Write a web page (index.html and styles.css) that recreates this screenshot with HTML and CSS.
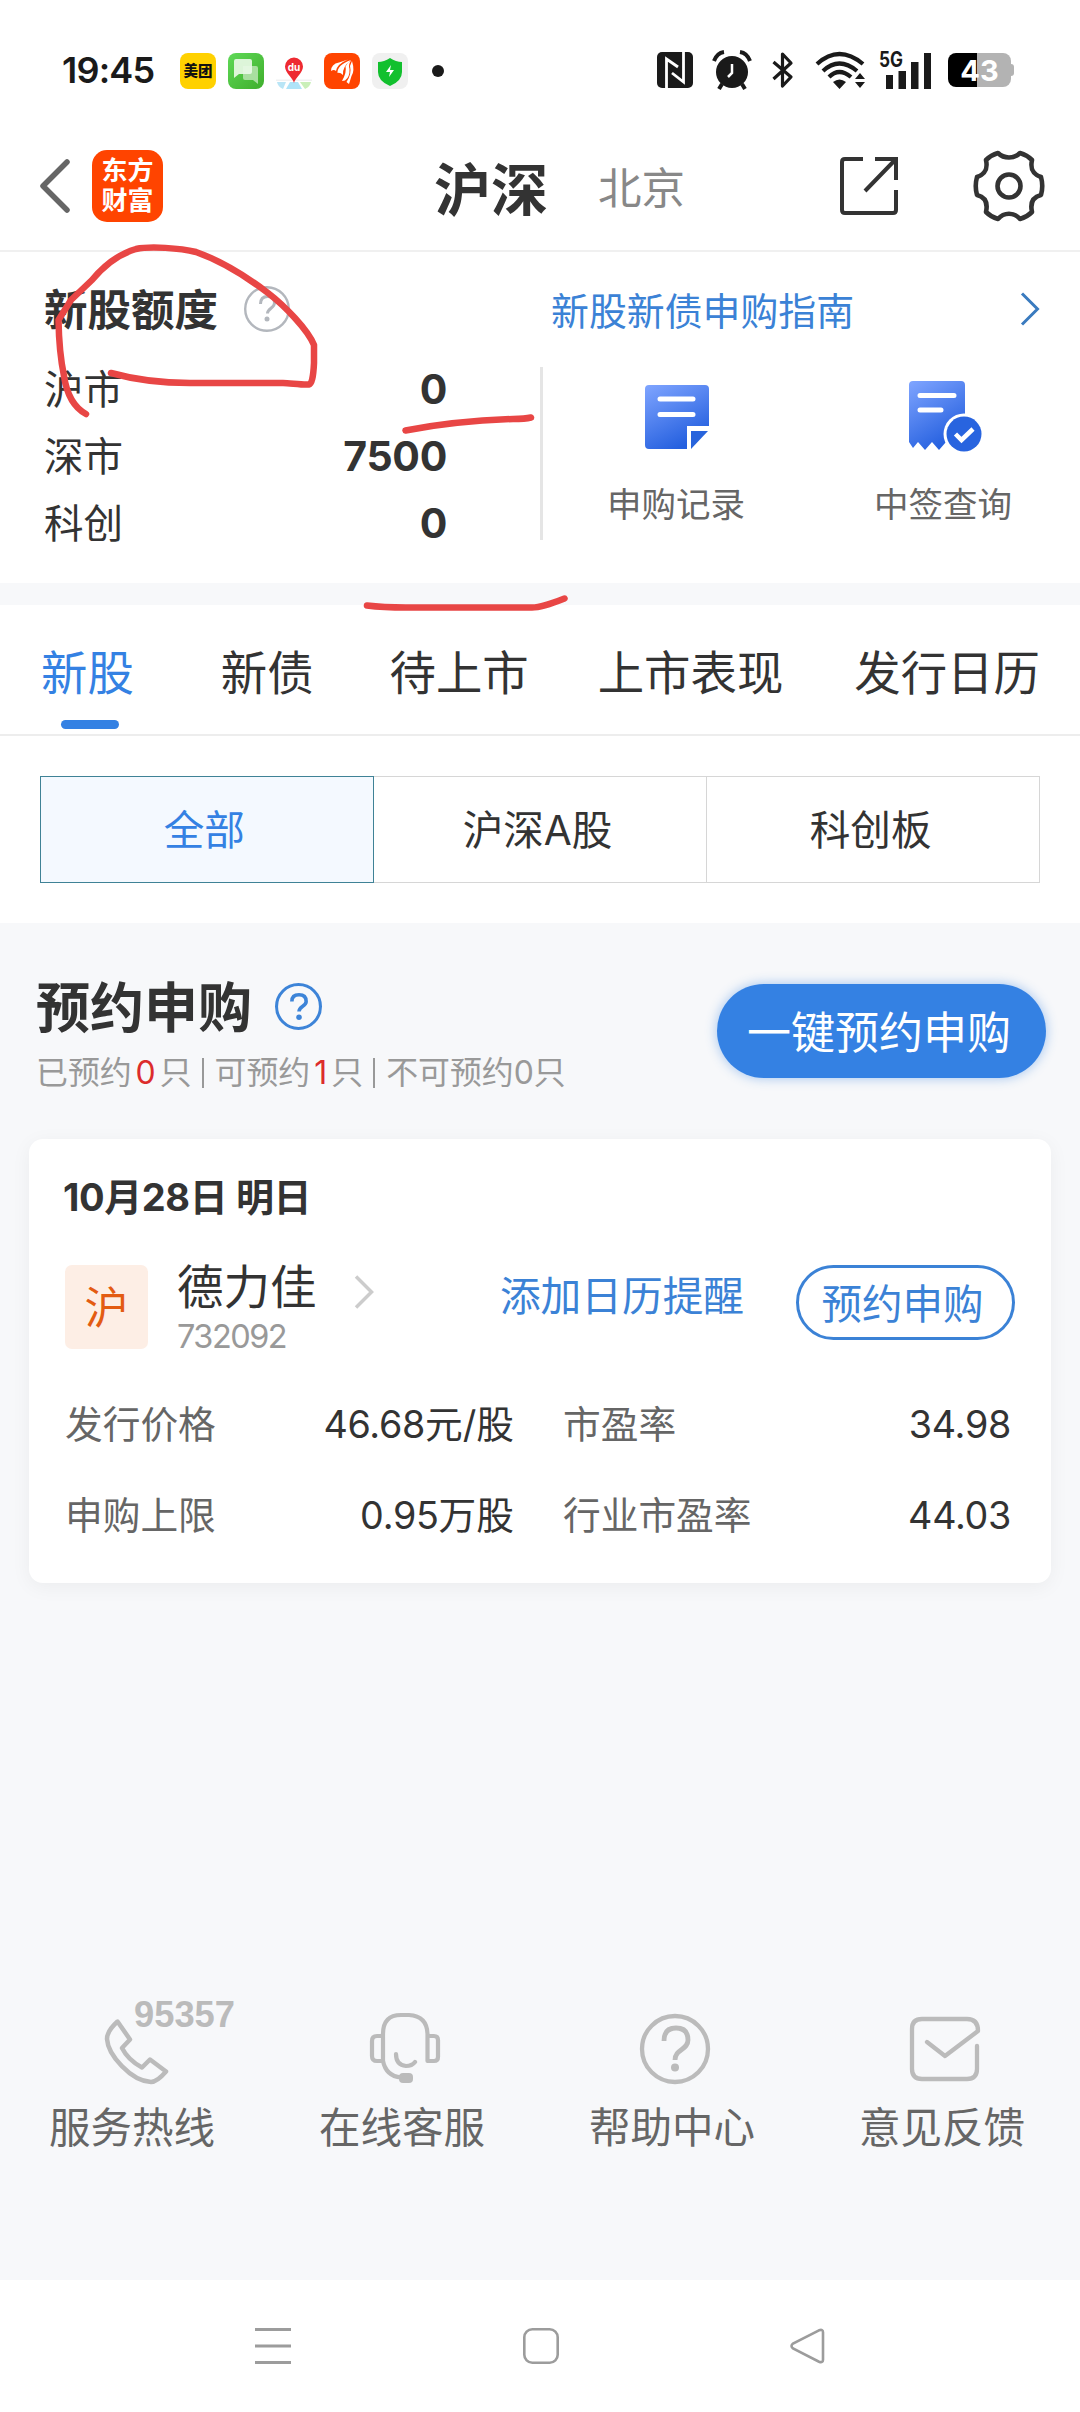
FILE: index.html
```html
<!DOCTYPE html>
<html lang="zh-CN">
<head>
<meta charset="utf-8">
<title>新股申购</title>
<link rel="stylesheet" href="styles.css">
</head>
<body>
<div class="screen">
  <header class="status">
    <span class="clock">19:45</span>
    <div class="notices">
      <span class="notice meituan">美团</span>
      <svg class="notice" viewBox="0 0 36 36"><defs><linearGradient id="gm" x1="0" y1="0" x2="1" y2="1"><stop offset="0" stop-color="#5fd957"/><stop offset="1" stop-color="#3fae2c"/></linearGradient></defs><rect width="36" height="36" rx="8" fill="url(#gm)"/><path d="M15 13h13a2 2 0 0 1 2 2v16l-5-4H17a2 2 0 0 1-2-2z" fill="#a9dfa0"/><path d="M8 6h14a2 2 0 0 1 2 2v11a2 2 0 0 1-2 2H11l-5 4V8a2 2 0 0 1 2-2z" fill="#e9f8e6" fill-opacity=".92"/></svg>
      <svg class="notice" viewBox="0 0 36 36"><path d="M1 29h9l-3 7q-5-2-6-7z" fill="#b9e5f6"/><path d="M14 29h8l4 7H10z" fill="#aee3f8"/><path d="M24 29h11q-1 5-6 7z" fill="#c9efb9"/><path d="M0 26.500h36v1.500H0z" fill="#f0f1f2"/><path d="M18 30C17 25 9 20 9 13.500a9 9 0 1 1 18 0C27 20 19 25 18 30z" fill="#ee2a31"/><text x="18" y="18" text-anchor="middle" class="du">du</text></svg>
      <svg class="notice" viewBox="0 0 36 36"><rect width="36" height="36" rx="8" fill="#ff4400"/><path d="M7 18Q7 11 15 9.500L24 6.500Q13 11 12 18q-2-2-5 0zM13.500 20Q13 12 27 7 18 14 19 22q-3-3-5.500-2zM18 28q5-9 3.500-14.500Q24 9 27 7.500 24 12 25.500 16 26 24 21 27.500zM22.500 29Q28 21 26 13l2-5q3 10-.5 15L25 31z" fill="#fff"/></svg>
      <svg class="notice" viewBox="0 0 36 36"><rect width="36" height="36" rx="8" fill="#f0f0f0"/><path d="M18 5q6 4 12 4v10q0 9-12 14Q6 28 6 19V9q6 0 12-4z" fill="#12c02e"/><path d="M19 12l-5 7h4l-1 5 5-7h-4z" fill="#fff"/></svg>
    </div>
    <span class="dot"></span>
    <div class="system">
      <svg width="36" height="36" viewBox="0 0 36 36"><rect width="36" height="36" rx="5" fill="#1a1a1a"/><path d="M9.500 36V7l11.500 8M26.500 0v30L15 21" fill="none" stroke="#fff" stroke-width="2.800"/></svg>
      <svg class="alarm" width="38" height="38" viewBox="0 0 38 38"><circle cx="19" cy="21" r="16" fill="#1a1a1a"/><path d="M1 10Q4 2 11 1M37 10Q34 2 27 1M9 33l-3 5M29 33l3 5" stroke="#1a1a1a" stroke-width="4" fill="none"/><path d="M19 13v9l-4 4" stroke="#fff" stroke-width="2.500" fill="none"/></svg>
      <svg class="bt" width="22" height="36" viewBox="0 0 22 36"><path d="M1.500 10L19 25l-8.500 9V2L19 11 1.500 27" fill="none" stroke="#1a1a1a" stroke-width="3.200" stroke-linejoin="round"/></svg>
      <svg class="wifi" width="52" height="37" viewBox="0 0 52 37"><path d="M2 12Q24-8 48 12M8 19Q24 4 42 19M14 25Q24 15 36 25" fill="none" stroke="#1a1a1a" stroke-width="4.200"/><path d="M18 30q6.500-5 13 0l-6.500 7zM40 27l5-6 5 6zM40 30h10l-5 6z" fill="#1a1a1a"/></svg>
      <svg class="signal" width="53" height="38" viewBox="0 0 53 38"><text x="-1" y="16" class="fiveg" textLength="24" lengthAdjust="spacingAndGlyphs">5G</text><path d="M6 24h7v14H6zM18.500 20h7.500v18h-7.500zM31 11h7.500v27H31zM44 2h7v36h-7z" fill="#1a1a1a"/></svg>
      <span class="battery"><span>43</span></span>
    </div>
  </header>

  <nav class="topbar">
    <svg class="back" width="30" height="54" viewBox="0 0 30 54"><path d="M27 3L3 27l24 24" fill="none" stroke="#666" stroke-width="5.500" stroke-linecap="round" stroke-linejoin="round"/></svg>
    <div class="brand"><span>东方</span><span>财富</span></div>
    <b class="market">沪深</b>
    <span class="market-alt">北京</span>
    <svg class="share" width="58" height="58" viewBox="0 0 58 58"><path d="M23 2H5Q2 2 2 5v48q0 3 3 3h48q3 0 3-3V33M35 2h21v21M56 2L25 34" fill="none" stroke="#333" stroke-width="4"/></svg>
    <svg class="gear" width="72" height="72" viewBox="0 0 72 72"><path d="M25 3q-7 2-12 7c2 9-1 14-9 17q-2.500 9 0 18c8 2 11 8 9 17q5 5 12 7c6-7 16-7 22 0q7-2 12-7c-2-9 1-15 9-17q2.500-9 0-18c-8-3-11-8-9-17q-5-5-12-7c-6 6-16 6-22 0z" fill="none" stroke="#333" stroke-width="4.600" stroke-linejoin="round"/><circle cx="36" cy="36" r="11.500" fill="none" stroke="#333" stroke-width="4.600"/></svg>
  </nav>

  <section class="quota">
    <div class="limits">
      <div class="limits-head"><b>新股额度</b>
        <svg width="46" height="46" viewBox="0 0 46 46"><circle cx="23" cy="23" r="21.800" fill="none" stroke="#b3b7bd" stroke-width="2.400"/><path d="M16.500 18q0-7.500 7-7.500t7 6.500c0 5-7 5.500-7 10.500" fill="none" stroke="#b3b7bd" stroke-width="3"/><circle cx="23" cy="33" r="2.500" fill="#b3b7bd"/></svg>
      </div>
      <div class="limit"><span>沪市</span><b>0</b></div>
      <div class="limit"><span>深市</span><b>7500</b></div>
      <div class="limit"><span>科创</span><b>0</b></div>
    </div>
    <div class="rule"></div>
    <div class="services">
      <div class="guide"><span>新股新债申购指南</span>
        <svg width="20" height="34" viewBox="0 0 20 34"><path d="M2 1.500L17.500 17 2 32.500" fill="none" stroke="#3a7bbf" stroke-width="3"/></svg>
      </div>
      <div class="shortcuts">
        <div class="shortcut">
          <svg width="74" height="74" viewBox="0 0 74 74"><defs><linearGradient id="gb" x1="0" y1="0" x2=".5" y2="1"><stop offset="0" stop-color="#80a5ff"/><stop offset="1" stop-color="#2560df"/></linearGradient></defs><path d="M10 5h56q4 0 4 4v37H48v23H10q-4 0-4-4V9q0-4 4-4z" fill="url(#gb)"/><path d="M52 51h17L52 69z" fill="#2864dc"/><path d="M21 19h33M21 34.500h33" stroke="#fff" stroke-width="5" stroke-linecap="round"/></svg>
          <span>申购记录</span>
        </div>
        <div class="shortcut">
          <svg width="74" height="74" viewBox="-2 0 74 74"><path d="M5 1h48q4 0 4 4v60l-5-4-7 8-7-7-7 8-7-8-7 8-7-8-5 6-4-6V5q0-4 4-4z" fill="url(#gb)"/><circle cx="56" cy="54" r="20.500" fill="#fff"/><circle cx="56" cy="54" r="17.500" fill="#2864df"/><path d="M47.500 54l6 6L65 49" fill="none" stroke="#fff" stroke-width="4.500"/><path d="M12 15.500h34M12 30h21" stroke="#fff" stroke-width="5" stroke-linecap="round"/></svg>
          <span>中签查询</span>
        </div>
      </div>
    </div>
  </section>

  <nav class="tabs">
    <span class="tab active">新股</span><span class="tab bonds">新债</span><span class="tab pending">待上市</span><span class="tab listed">上市表现</span><span class="tab calendar">发行日历</span>
  </nav>

  <div class="filter">
    <div class="segments">
      <span class="segment active">全部</span><span class="segment">沪深A股</span><span class="segment">科创板</span>
    </div>
  </div>

  <main class="content">
    <div class="booking">
      <div class="booking-info">
        <h2><span>预约申购</span>
          <svg width="47" height="47" viewBox="0 0 46 46"><circle cx="23" cy="23" r="21.500" fill="none" stroke="#3d84d8" stroke-width="3"/><path d="M16.500 18q0-6.500 7-6.500t7 6.500c0 5-7 4.500-7 10" fill="none" stroke="#3d84d8" stroke-width="3.500"/><circle cx="23.500" cy="33.500" r="2.700" fill="#3d84d8"/></svg>
        </h2>
        <p><span>已预约</span><em>0</em><span>只</span><i></i><span>可预约</span><em class="one">1</em><span>只</span><i></i><span>不可预约0只</span></p>
      </div>
      <button class="book-all">一键预约申购</button>
    </div>

    <article class="card">
      <h3>10月28日 明日</h3>
      <div class="stock">
        <span class="badge">沪</span>
        <div class="stock-name"><span class="name">德力佳</span><span class="code">732092</span></div>
        <svg class="more" width="20" height="34" viewBox="0 0 20 34"><path d="M2 1.500L17.500 17 2 32.500" fill="none" stroke="#ccc" stroke-width="3.500"/></svg>
        <span class="remind">添加日历提醒</span>
        <button class="book">预约申购</button>
      </div>
      <div class="facts">
        <span class="label">发行价格</span><span class="value"><span class="num">46.68</span>元/股</span><span class="label ratio">市盈率</span><span class="value num">34.98</span>
        <span class="label">申购上限</span><span class="value"><span class="num">0.95</span>万股</span><span class="label ratio">行业市盈率</span><span class="value num">44.03</span>
      </div>
    </article>
  </main>

  <footer class="help">
    <div class="help-item">
      <svg width="140" height="90" viewBox="0 0 140 90"><path d="M52.500 27.500Q42 37 42 45C43 61 66 87 86 88Q92 88 101 77.500L85 65.500 77 73.500Q63 66 57 54L65 45.500z" fill="none" stroke="#bbb" stroke-width="4.500" stroke-linejoin="round"/><text x="69" y="33" class="hotline" textLength="101" lengthAdjust="spacingAndGlyphs">95357</text></svg>
      <span>服务热线</span>
    </div>
    <div class="help-item">
      <svg width="140" height="90" viewBox="0 3 140 90"><g fill="none" stroke="#bbb" stroke-width="4.200" stroke-linecap="round" stroke-linejoin="round"><path d="M48 43V70M48 43Q48 24 66 24h8Q92 25 92.500 43V70H99q4 0 4-4V49q0-4-4-4h-6M48 45h-6q-5 0-5 5v15q0 5 5 5h6q3 15 18 16.500M61 63q0 11 10 12 6 0 9-4"/></g><rect x="64" y="82" width="14" height="10" rx="4" fill="#bbb"/></svg>
      <span>在线客服</span>
    </div>
    <div class="help-item">
      <svg width="140" height="90" viewBox="0 3 140 90"><circle cx="70" cy="58" r="33" fill="none" stroke="#bbb" stroke-width="4.300"/><path d="M59 50q0-13 12-13t12 12c0 10-13 9-13 20" fill="none" stroke="#bbb" stroke-width="4.800"/><circle cx="70" cy="76.500" r="4" fill="#bbb"/></svg>
      <span>帮助中心</span>
    </div>
    <div class="help-item">
      <svg width="140" height="90" viewBox="0 3 140 90"><path d="M102 55v23q0 10-10 10H47q-10 0-10-10V38q0-10 10-10h45q11 0 11 12L70 65 52 51" fill="none" stroke="#bbb" stroke-width="4.300" stroke-linecap="round" stroke-linejoin="round"/></svg>
      <span>意见反馈</span>
    </div>
  </footer>

  <nav class="system-nav">
    <svg width="36" height="36" viewBox="0 0 36 36"><path d="M0 1.500h36M0 18h36M0 34.500h36" stroke="#9c9c9c" stroke-width="3"/></svg>
    <svg width="36" height="36" viewBox="0 0 36 36"><rect x="1.300" y="1.300" width="33.400" height="33.400" rx="8" fill="none" stroke="#9c9c9c" stroke-width="2.600"/></svg>
    <svg width="36" height="36" viewBox="0 0 36 36"><path d="M29 2.300L3 15.500q-3 2.500 0 5L29 33.700q4 1.500 4-2V4.300q0-3.500-4-2z" fill="none" stroke="#9c9c9c" stroke-width="2.600"/></svg>
  </nav>

  <svg class="marks" width="1080" height="640" viewBox="0 0 1080 640"><g fill="none" stroke="#e84645" stroke-width="6.500" stroke-linecap="round" stroke-linejoin="round"><path d="M86 414C75 408 67 396 64 376Q59 352 58.500 320L71 300 92 280Q112 256 136 249C150 246 180 248 196 252Q230 264 268 293C285 306 308 330 314 345V363Q313 384 309 384.500C301 385 290 383 283 383H190C160 383 136 380 111 373"/><path d="M405.500 430.500Q455 421 513 419q12 0 18-1.500"/><path d="M367 605.500q16 2 39 2H532q10 0 32.500-9"/></g></svg>
</div>
</body>
</html>
```
FILE: styles.css
```css
* { box-sizing: border-box; }

body {
  margin: 0;
  background: #fff;
  color: #333;
  font-family: Inter, "Noto Sans CJK SC", sans-serif;
}

button { font-family: inherit; padding: 0; }
svg { display: block; flex: none; overflow: visible; }

.screen {
  position: relative;
  width: 1080px;
  height: 2412px;
  display: flex;
  flex-direction: column;
  overflow: hidden;
  white-space: nowrap;
}

/* status bar */
.status { height: 142px; flex: none; display: flex; align-items: center; padding: 0 0 1px 62px; }
.clock { width: 118px; font-size: 36px; font-weight: 600; line-height: 40px; color: #1a1a1a; letter-spacing: -0.8px; padding-bottom: 2px; }
.notices { display: flex; gap: 12px; }
.notice { width: 36px; height: 36px; }
.meituan { border-radius: 8px; background: #ffd100; color: #111; font-size: 14.500px; font-weight: 900; line-height: 36px; text-align: center; }
.du { font: 700 10px Inter, sans-serif; fill: #fff; }
.dot { width: 12px; height: 12px; margin-left: 24px; border-radius: 50%; background: #1a1a1a; }
.system { display: flex; align-items: center; margin-left: 213px; padding-bottom: 1px; }
.alarm { margin-left: 20px; }
.bt { margin-left: 21px; }
.wifi { margin-left: 21px; }
.signal { margin-left: 13px; }
.fiveg { font: 700 21px Inter, sans-serif; fill: #1a1a1a; }
.battery {
  width: 63px; height: 34px; margin-left: 15px; border-radius: 8px;
  background: linear-gradient(90deg, #000 29px, #b3b3b3 29px);
  color: #fff; font-size: 29px; font-weight: 700; line-height: 35px; text-align: center;
  position: relative;
}
.battery::after { content: ""; position: absolute; left: 62px; top: 11px; width: 4px; height: 12px; border-radius: 0 3px 3px 0; background: #b3b3b3; }

/* title bar */
.topbar { height: 110px; flex: none; display: flex; align-items: center; padding-left: 40px; padding-bottom: 21px; border-bottom: 2px solid #f0f0f0; }
.brand {
  width: 71px; height: 72px; margin-left: 22px; border-radius: 15px; background: #ff4400; color: #fff;
  display: flex; flex-direction: column; justify-content: center; align-items: center;
  font-size: 26px; font-weight: 700; line-height: 30px;
}
.market { width: 114px; margin-left: 271px; font-size: 57px; line-height: 60px; padding-top: 10px; }
.market-alt { width: 88px; margin-left: 50px; font-size: 43.500px; line-height: 50px; color: #888; padding-top: 5px; }
.share { margin-left: 154px; }
.gear { margin-left: 75px; }

/* quota panel */
.quota { height: 353px; flex: none; display: flex; border-bottom: 22px solid #f7f8fa; }
.limits { width: 540px; padding: 34px 93px 0 44px; }
.limits-head { height: 48px; display: flex; align-items: center; gap: 26px; margin-bottom: 21px; font-size: 43.500px; line-height: 50px; }
.limits-head svg { margin-bottom: 2px; }
.limit { height: 67px; display: flex; justify-content: space-between; align-items: center; font-size: 39.500px; }
.limit span { padding-bottom: 4px; }
.limit b { font-size: 41px; letter-spacing: -0.3px; }
.rule { width: 3px; height: 173px; margin-top: 115px; background: #e5e5e5; }
.services { width: 537px; }
.guide { height: 86px; padding: 32px 40px 0 8px; display: flex; align-items: center; justify-content: space-between; color: #3b82d6; font-size: 37.900px; }
.guide span { padding-bottom: 5px; }
.guide svg { margin-bottom: 4px; }
.shortcuts { display: flex; justify-content: space-between; margin-top: 42px; padding: 0 67px 0 63px; }
.shortcut { width: 140px; display: flex; flex-direction: column; align-items: center; color: #666; font-size: 34.500px; line-height: 50px; gap: 26px; }

/* tabs */
.tabs { height: 131px; flex: none; display: flex; padding-left: 41px; border-bottom: 2px solid #ededed; font-size: 46.400px; line-height: 136px; }
.active { color: #3481e3; }
.tab.active { position: relative; }
.tab.active::after { content: ""; position: absolute; left: 20px; bottom: 5px; width: 58px; height: 9px; border-radius: 5px; background: #3481e3; }
.bonds { margin-left: 87px; }
.pending { margin-left: 76px; }
.listed { margin-left: 69px; }
.calendar { margin-left: 71px; }

.filter { height: 187px; flex: none; padding: 40px 40px 0; }
.segments { height: 107px; display: grid; grid-template-columns: repeat(3, 1fr); border: 1px solid #d6d6d6; font-size: 40.600px; line-height: 107px; text-align: center; }
.segment { height: 105px; padding-right: 5px; }
.segment + .segment + .segment { border-left: 1px solid #d6d6d6; }
.segment.active { height: 107px; margin: -1px 0 -1px -1px; border: 1.500px solid #3f8296; background: #f4f9ff; }

/* booking list */
.content { height: 1071px; flex: none; background: #f7f8fa; padding: 56px 29px 0; }
.booking { height: 160px; display: flex; justify-content: space-between; padding: 0 5px 0 7px; }
h2 { margin: 0; display: flex; align-items: center; gap: 23px; font-size: 54px; line-height: 56px; }
h2 span { padding-top: 2px; }
h2 svg { margin-bottom: 4px; }
.booking-info p { margin: 16px 0 0; display: flex; align-items: center; color: #999; font-size: 31.900px; line-height: 40px; }
.booking-info em { width: 28px; text-align: center; font-style: normal; color: #dc2c2c; }
.booking-info em.one { width: 21px; }
.booking-info i { width: 2px; height: 30px; margin: 0 11px 0 10px; background: #999; }
.book-all { width: 329px; height: 94px; margin-top: 5px; padding-right: 5px; border: 0; border-radius: 47px; background: #3481e3; color: #fff; font-size: 44px; line-height: 98px; box-shadow: 0 0 12px rgba(52, 129, 227, .45); }

.card { height: 444px; padding: 36px 36px 0; border-radius: 14px; background: #fff; box-shadow: 0 4px 20px rgba(0, 0, 0, .05); }
h3 { margin: 0 0 0 -2px; font-size: 38px; line-height: 44px; letter-spacing: -0.4px; }
.stock { height: 84px; display: flex; align-items: center; margin-top: 46px; }
.badge { width: 83px; height: 84px; border-radius: 7px; background: #fdeee5; color: #e35b12; font-size: 44px; line-height: 86px; text-align: center; }
.stock-name { width: 177px; margin-left: 29px; display: flex; flex-direction: column; }
.name { font-size: 46.500px; line-height: 54px; margin-top: 1px; }
.code { font-size: 32.500px; line-height: 36px; color: #999; letter-spacing: -1.500px; margin-top: 5px; }
.more { margin-top: -31px; }
.remind { margin: -27px 0 0 126px; color: #3b82d6; font-size: 40.700px; }
.book { width: 219px; height: 75px; margin: -9px 0 0 52px; padding-right: 6px; border: 3px solid #3b82d6; border-radius: 38px; background: #fff; color: #3b82d6; font-size: 40.500px; line-height: 73px; }
.facts { display: grid; grid-template-columns: 160px 289px 230px 1fr; grid-auto-rows: 91px; margin-top: 29px; font-size: 37.700px; line-height: 92px; padding-right: 4px; }
.label { color: #666; }
.value { text-align: right; }
.ratio { padding-left: 49px; }
.num { letter-spacing: -0.300px; }

/* help links */
.help { height: 286px; flex: none; display: grid; grid-template-columns: repeat(4, 270px); background: #f7f8fa; color: #666; }
.help-item { display: flex; flex-direction: column; align-items: center; font-size: 41.500px; line-height: 50px; }
.help-item span { margin: 19px 6px 0 0; }
.hotline { font: 700 36px "Liberation Sans", sans-serif; fill: #bbb; }

.system-nav { height: 132px; flex: none; display: flex; justify-content: space-between; align-items: center; padding: 0 254px 0 255px; }

/* hand-drawn pen strokes above the page */
.marks { position: absolute; left: 0; top: 0; pointer-events: none; }
```
